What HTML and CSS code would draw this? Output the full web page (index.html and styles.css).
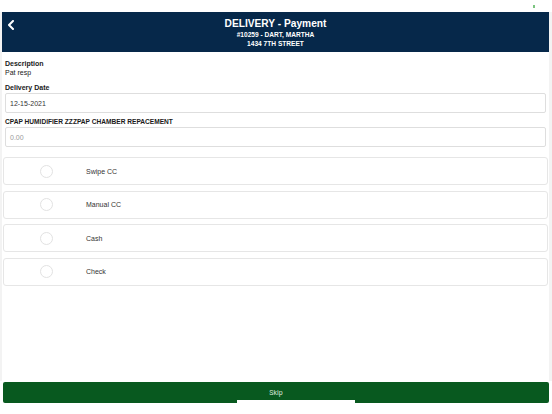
FILE: index.html
```html
<!DOCTYPE html>
<html>
<head>
<meta charset="utf-8">
<link rel="stylesheet" href="styles.css">
</head>
<body>
<div class="status"><span class="dot"></span></div>
<div class="page">
  <div class="header">
    <div class="back">
      <svg width="8" height="10" viewBox="0 0 8 10"><path d="M6 1 L2 5 L6 9" fill="none" stroke="#ffffff" stroke-width="2" stroke-linecap="round" stroke-linejoin="round"/></svg>
    </div>
    <div class="titles">
      <div class="title">DELIVERY - Payment</div>
      <div class="sub">#10259 - DART, MARTHA</div>
      <div class="sub">1434 7TH STREET</div>
    </div>
    <div class="spacer"></div>
  </div>
  <div class="content">
    <div class="form">
      <div class="label">Description</div>
      <div class="value">Pat resp</div>
      <div class="label gap">Delivery Date</div>
      <div class="input">12-15-2021</div>
      <div class="label gap2">CPAP HUMIDIFIER ZZZPAP CHAMBER REPACEMENT</div>
      <div class="input placeholder">0.00</div>
    </div>
    <div class="options">
      <div class="option"><span class="radio"></span><span class="opt-label">Swipe CC</span></div>
      <div class="option"><span class="radio"></span><span class="opt-label">Manual CC</span></div>
      <div class="option"><span class="radio"></span><span class="opt-label">Cash</span></div>
      <div class="option"><span class="radio"></span><span class="opt-label">Check</span></div>
    </div>
  </div>
  <div class="footer">
    <div class="skip">Skip</div>
    <div class="home"></div>
  </div>
</div>
</body>
</html>
```
FILE: styles.css
```css
html, body {
  margin: 0;
  padding: 0;
  width: 552px;
  height: 414px;
  overflow: hidden;
  background: #ffffff;
  font-family: "Liberation Sans", Arial, sans-serif;
}
.status {
  height: 12px;
  position: relative;
}
.dot {
  position: absolute;
  left: 533px;
  top: 5px;
  width: 2px;
  height: 3px;
  background: #7bc47f;
}
.page {
  background: #f3f3f3;
  padding: 0 3px 0 2px;
  height: 402px;
  display: flex;
  flex-direction: column;
  position: relative;
}
.header {
  height: 40px;
  background: #06284a;
  display: grid;
  grid-template-columns: 40px 1fr 40px;
  align-items: center;
  color: #ffffff;
}
.back {
  padding-left: 5px;
  display: flex;
  align-items: center;
  margin-top: -15px;
}
.titles {
  text-align: center;
  font-weight: bold;
}
.title {
  font-size: 10.2px;
  line-height: 13px;
  margin-top: 1px;
}
.sub {
  font-size: 6.6px;
  line-height: 9px;
}
.content {
  background: #ffffff;
  height: 329px;
  display: flex;
  flex-direction: column;
}
.form {
  padding: 7px 3px 0 3px;
  display: flex;
  flex-direction: column;
}
.label {
  font-size: 7px;
  font-weight: bold;
  color: #1a1a1a;
  line-height: 9px;
}
.label.gap {
  margin-top: 5px;
}
.label.gap2 {
  margin-top: 4px;
  font-size: 6.6px;
}
.value {
  font-size: 7px;
  color: #222222;
  line-height: 10px;
}
.input {
  margin-top: 1px;
  height: 18px;
  border: 1px solid #dedede;
  border-radius: 2px;
  font-size: 7px;
  color: #333333;
  display: flex;
  align-items: center;
  padding-left: 4px;
}
.input.placeholder {
  color: #9a9a9a;
}
.options {
  margin-top: 10px;
  padding: 0 1px;
  display: flex;
  flex-direction: column;
  gap: 5.5px;
}
.option {
  height: 26px;
  border: 1px solid #e6e6e6;
  border-radius: 3px;
  display: flex;
  align-items: center;
}
.radio {
  width: 11px;
  height: 11px;
  border: 1px solid #e2e2e2;
  border-radius: 50%;
  margin-left: 36px;
}
.opt-label {
  margin-left: 33px;
  font-size: 7px;
  color: #333333;
}
.footer {
  background: #ffffff;
  margin: 0 -3px 0 -2px;
  padding: 1px 3px 0 3px;
  flex: 1;
}
.skip {
  height: 21px;
  background: #08591f;
  border-radius: 2px;
  color: #d6e6d8;
  font-size: 7px;
  font-family: Roboto, "Liberation Sans", sans-serif;
  display: flex;
  align-items: center;
  justify-content: center;
}
.home {
  position: absolute;
  left: 237px;
  top: 388px;
  width: 118px;
  height: 14px;
  background: #ffffff;
}
```
